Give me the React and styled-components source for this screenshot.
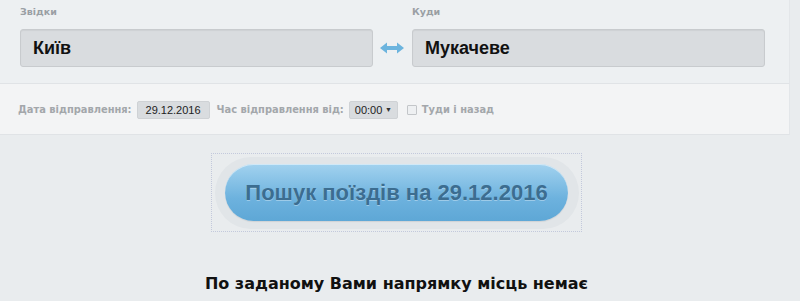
import React from "react";
import styled, { createGlobalStyle } from "styled-components";

const Global = createGlobalStyle`
  html, body { margin: 0; padding: 0; background: #e9ecee; }
  body { font-family: "Liberation Sans", Arial, sans-serif; width: 800px; height: 301px; overflow: hidden; }
`;

const Page = styled.div`
  width: 800px;
  display: flex;
  flex-direction: column;
`;

const Panel = styled.div`
  width: 790px;
  box-sizing: border-box;
  background: ${(p) => p.$bg};
  border-right: 1px solid #e3e6e9;
  border-bottom: 1px solid #e0e3e6;
`;

const RouteRow = styled.div`
  display: flex;
  align-items: flex-end;
  padding: 6px 24px 16px 20px;
  height: 83px;
  box-sizing: border-box;
`;

const Field = styled.div`
  display: flex;
  flex-direction: column;
  width: 354px;
`;

const Label = styled.div`
  font-family: "DejaVu Sans", Verdana, sans-serif;
  font-weight: bold;
  font-size: 9.5px;
  color: #9a9fa4;
  height: 22px;
  line-height: 10px;
`;

const CityInput = styled.div`
  height: 38px;
  box-sizing: border-box;
  border: 1px solid #c8cbce;
  border-radius: 3px;
  background: #d9dcdf;
  box-shadow: inset 0 1px 1px rgba(0,0,0,0.05);
  display: flex;
  align-items: center;
  padding-left: 12px;
  font-family: "Liberation Sans", Arial, sans-serif;
  font-weight: bold;
  font-size: 18px;
  color: #111;
`;

const Swap = styled.div`
  width: 39px;
  height: 38px;
  display: flex;
  align-items: center;
  justify-content: center;
`;

const OptionsRow = styled.div`
  display: flex;
  align-items: center;
  height: 50px;
  padding-left: 18px;
  padding-top: 1px;
  box-sizing: border-box;
  font-family: "DejaVu Sans", Verdana, sans-serif;
  font-weight: bold;
  font-size: 9.9px;
  color: #a3a7ab;
`;

const SmallBox = styled.div`
  height: 18px;
  box-sizing: border-box;
  background: #d9dcdf;
  border: 1px solid #cfd2d5;
  border-radius: 2px;
  display: flex;
  align-items: center;
  justify-content: ${(p) => (p.$select ? "space-between" : "center")};
  width: ${(p) => p.$w}px;
  margin: ${(p) => p.$m};
  padding: 0 5px;
  font-family: "Liberation Sans", Arial, sans-serif;
  font-weight: normal;
  font-size: 11px;
  color: #222;
`;

const Caret = styled.span`
  font-size: 7px;
  color: #333;
`;

const Check = styled.span`
  width: 8px;
  height: 8px;
  border: 1px solid #c3c6c9;
  background: #eef0f2;
  border-radius: 1px;
  margin-right: 5px;
`;

const ButtonArea = styled.div`
  display: flex;
  justify-content: center;
  padding-top: 18px;
  padding-right: 7px;
`;

const Frame = styled.div`
  width: 371px;
  height: 79px;
  box-sizing: border-box;
  border: 1px dotted #c3c9dc;
  display: flex;
  align-items: center;
  justify-content: center;
`;

const Ring = styled.div`
  width: 364px;
  height: 72px;
  border-radius: 36px;
  background: #e1e5e8;
  display: flex;
  align-items: center;
  justify-content: center;
`;

const SearchButton = styled.div`
  width: 343px;
  height: 57px;
  border-radius: 29px;
  background: linear-gradient(#a2d2ef, #6db2de 60%, #5ea7d6);
  box-shadow: inset 0 1px 0 rgba(255,255,255,0.5), 0 1px 1px rgba(0,0,0,0.08);
  display: flex;
  align-items: center;
  justify-content: center;
  font-family: "Liberation Sans", Arial, sans-serif;
  font-weight: bold;
  font-size: 22px;
  color: #3c6d90;
  text-shadow: 0 1px 0 rgba(255,255,255,0.35);
`;

const Notice = styled.div`
  text-align: center;
  padding-top: 42px;
  padding-right: 7px;
  font-family: "DejaVu Sans", Verdana, sans-serif;
  font-weight: bold;
  font-size: 16px;
  color: #111;
`;

const SwapIcon = () => (
  <svg width="24" height="12" viewBox="0 0 24 12">
    <path d="M0 6 L7 0.5 V4 H17 V0.5 L24 6 L17 11.5 V8 H7 V11.5 Z" fill="#6cb4de" />
  </svg>
);

export default function App() {
  return (
    <Page>
      <Global />
      <Panel $bg="#edf0f2">
        <RouteRow>
          <Field>
            <Label>Звідки</Label>
            <CityInput>Київ</CityInput>
          </Field>
          <Swap>
            <SwapIcon />
          </Swap>
          <Field>
            <Label>Куди</Label>
            <CityInput>Мукачеве</CityInput>
          </Field>
        </RouteRow>
      </Panel>
      <Panel $bg="#f3f4f5">
        <OptionsRow>
          Дата відправлення:
          <SmallBox $w={73} $m="0 7px 0 5px">29.12.2016</SmallBox>
          Час відправлення від:
          <SmallBox $w={49} $m="0 9px 0 5px" $select>
            00:00 <Caret>▼</Caret>
          </SmallBox>
          <Check />
          Туди і назад
        </OptionsRow>
      </Panel>
      <ButtonArea>
        <Frame>
          <Ring>
            <SearchButton>Пошук поїздів на 29.12.2016</SearchButton>
          </Ring>
        </Frame>
      </ButtonArea>
      <Notice>По заданому Вами напрямку місць немає</Notice>
    </Page>
  );
}
